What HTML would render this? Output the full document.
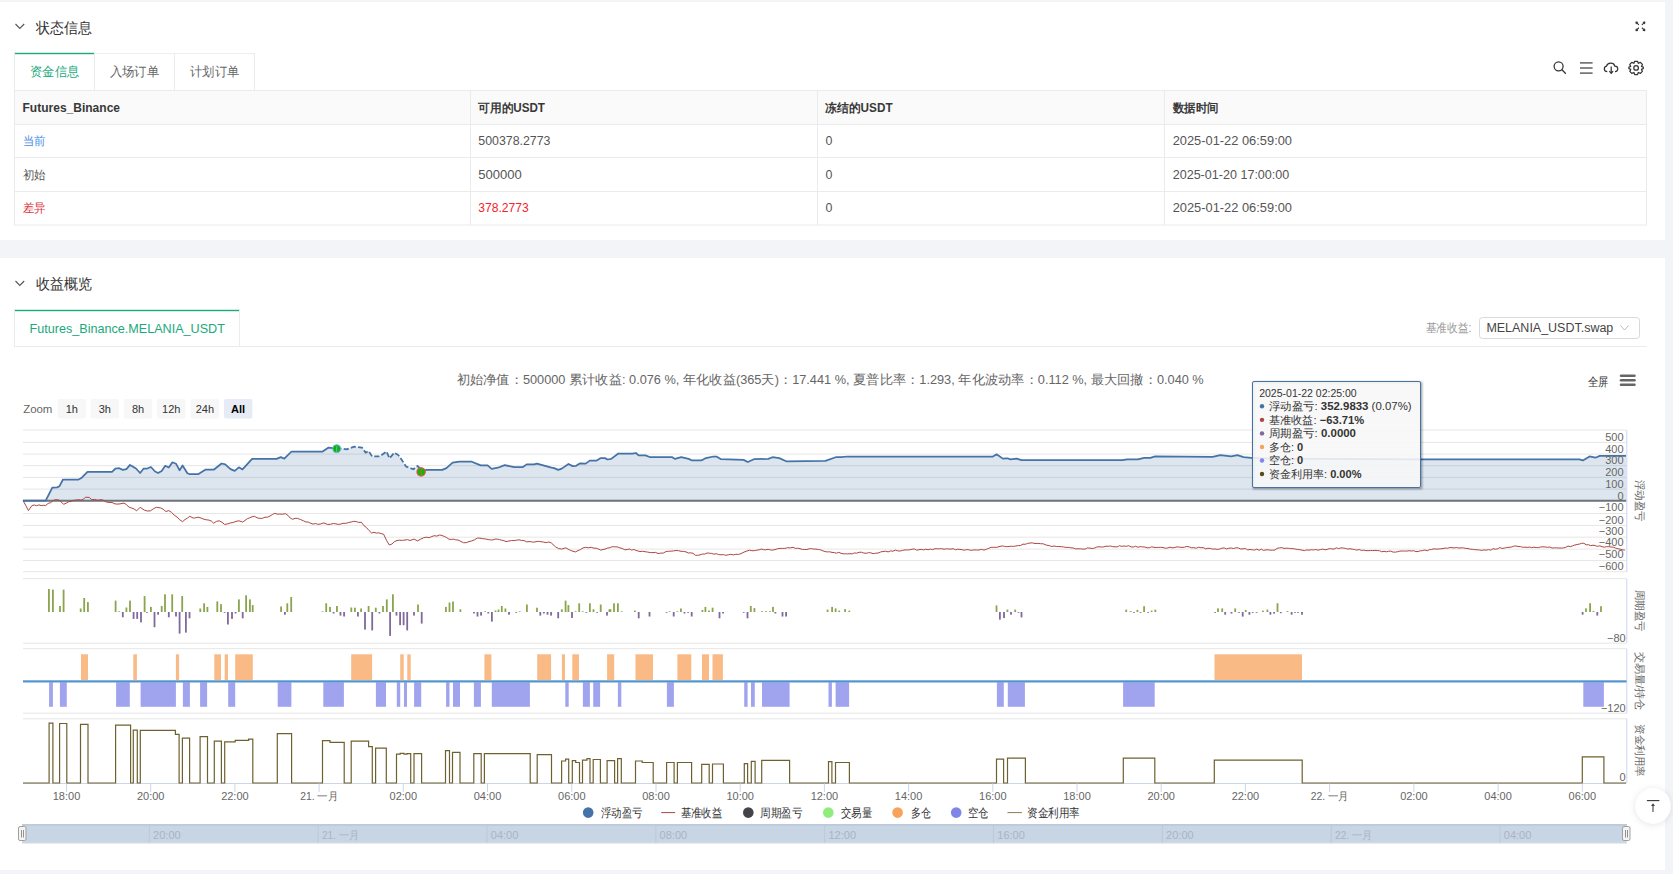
<!DOCTYPE html>
<html><head><meta charset="utf-8"><title>status</title><style>
html,body{margin:0;padding:0}
body{width:1673px;height:874px;overflow:hidden;background:#f3f4f7;font-family:"Liberation Sans", sans-serif;position:relative;color:#333}
.panel{position:absolute;left:0;width:1665px;background:#fff}
svg{position:absolute;left:0;top:0}
svg text{font-family:"Liberation Sans", sans-serif}
</style></head><body>
<div class="panel" style="top:2px;height:238px"></div>
<div class="panel" style="top:258px;height:612px"></div>
<svg width="1673" height="874" viewBox="0 0 1673 874">
<polyline points="15.5,24 19.8,28.5 24.2,24" fill="none" stroke="#555" stroke-width="1.1"/>
<polyline points="15.5,281 19.8,285.5 24.2,281" fill="none" stroke="#555" stroke-width="1.1"/>
<text x="36" y="33" font-size="15" fill="#333" textLength="56" lengthAdjust="spacingAndGlyphs">状态信息</text>
<text x="36" y="289.3" font-size="15" fill="#333" textLength="56.3" lengthAdjust="spacingAndGlyphs">收益概览</text>
<g stroke="#3a3a3a" stroke-width="1.1" fill="none" stroke-linecap="round" stroke-linejoin="round">
<path d="M1636.2,23.6 L1636,22 L1637.6,22.2 M1636.1,22.1 L1638.6,24.6"/>
<path d="M1644.6,23.6 L1644.8,22 L1643.2,22.2 M1644.7,22.1 L1642.2,24.6"/>
<path d="M1636.2,29 L1636,30.6 L1637.6,30.4 M1636.1,30.5 L1638.6,28"/>
<path d="M1644.6,29 L1644.8,30.6 L1643.2,30.4 M1644.7,30.5 L1642.2,28"/>
</g>
<rect x="14" y="52.8" width="80.5" height="1.4" fill="#19a97b"/>
<line x1="94.5" y1="53.5" x2="255" y2="53.5" stroke="#eeeeee"/>
<line x1="14.5" y1="53" x2="14.5" y2="90" stroke="#ececec"/>
<line x1="94.5" y1="53" x2="94.5" y2="90" stroke="#ececec"/>
<line x1="174.5" y1="53" x2="174.5" y2="90" stroke="#ececec"/>
<line x1="254.5" y1="53" x2="254.5" y2="90" stroke="#ececec"/>
<text x="30" y="76" font-size="13" fill="#19a97b" textLength="49" lengthAdjust="spacingAndGlyphs">资金信息</text>
<text x="109.8" y="76" font-size="13" fill="#666" textLength="49.4" lengthAdjust="spacingAndGlyphs">入场订单</text>
<text x="190.2" y="76" font-size="13" fill="#666" textLength="49.2" lengthAdjust="spacingAndGlyphs">计划订单</text>
<g stroke="#333" stroke-width="1.25" fill="none">
<circle cx="1558.6" cy="66.3" r="4.5"/>
<line x1="1561.8" y1="69.5" x2="1565.8" y2="73.8"/>
<g stroke="#555" stroke-width="1.4"><line x1="1580" y1="62.9" x2="1592.6" y2="62.9"/><line x1="1580" y1="68" x2="1592.6" y2="68"/><line x1="1580" y1="73.1" x2="1592.6" y2="73.1"/></g>
<path d="M1607.3,71.6 C1603.5,71.6 1603.5,66.8 1606.5,66.2 C1607.5,62.5 1613.5,62 1614.8,66 C1618.6,66 1618.8,71.6 1615,71.6"/>
<line x1="1611.2" y1="66.5" x2="1611.2" y2="73.2"/>
<polyline points="1609.3,71.2 1611.2,73.3 1613.1,71.2"/>
<circle cx="1636.1" cy="67.9" r="2.3"/>
<path d="M1634.7,61.3 L1637.5,61.3 L1638.3,63.3 L1640.4,62.4 L1642.4,64.4 L1641.5,66.5 L1643.3,67.2 L1643.3,68.6 L1641.5,69.4 L1642.4,71.4 L1640.4,73.4 L1638.3,72.5 L1637.5,74.5 L1634.7,74.5 L1633.9,72.5 L1631.8,73.4 L1629.8,71.4 L1630.7,69.4 L1628.9,68.6 L1628.9,67.2 L1630.7,66.5 L1629.8,64.4 L1631.8,62.4 L1633.9,63.3 Z" stroke-linejoin="round"/>
</g>
<rect x="14.5" y="90.5" width="1632" height="34" fill="#fafafa"/>
<rect x="14.5" y="90.5" width="1632" height="134.5" fill="none" stroke="#ebebeb"/>
<line x1="14" y1="124.5" x2="1647" y2="124.5" stroke="#ebebeb"/>
<line x1="14" y1="157.5" x2="1647" y2="157.5" stroke="#ebebeb"/>
<line x1="14" y1="191.5" x2="1647" y2="191.5" stroke="#ebebeb"/>
<line x1="470.5" y1="90" x2="470.5" y2="225" stroke="#ebebeb"/>
<line x1="817.5" y1="90" x2="817.5" y2="225" stroke="#ebebeb"/>
<line x1="1164.5" y1="90" x2="1164.5" y2="225" stroke="#ebebeb"/>
<text x="22.5" y="111.5" font-size="12" fill="#383838" textLength="97.5" lengthAdjust="spacingAndGlyphs" font-weight="bold">Futures_Binance</text>
<text x="478.3" y="111.5" font-size="12" fill="#383838" textLength="66.7" lengthAdjust="spacingAndGlyphs" font-weight="bold">可用的USDT</text>
<text x="825.4" y="111.5" font-size="12" fill="#383838" textLength="67.2" lengthAdjust="spacingAndGlyphs" font-weight="bold">冻结的USDT</text>
<text x="1172.7" y="111.5" font-size="12" fill="#383838" textLength="45.7" lengthAdjust="spacingAndGlyphs" font-weight="bold">数据时间</text>
<text x="22.5" y="145" font-size="12.4" fill="#4a90e2" textLength="22.7" lengthAdjust="spacingAndGlyphs">当前</text>
<text x="22.5" y="178.5" font-size="12.4" fill="#555" textLength="22.7" lengthAdjust="spacingAndGlyphs">初始</text>
<text x="22.5" y="212" font-size="12.4" fill="#d9363e" textLength="22.7" lengthAdjust="spacingAndGlyphs">差异</text>
<text x="478.3" y="145" font-size="12.4" fill="#555" textLength="72.2" lengthAdjust="spacingAndGlyphs">500378.2773</text>
<text x="478.3" y="178.5" font-size="12.4" fill="#555" textLength="43.5" lengthAdjust="spacingAndGlyphs">500000</text>
<text x="478.3" y="212" font-size="12.4" fill="#f5222d" textLength="50.5" lengthAdjust="spacingAndGlyphs">378.2773</text>
<text x="825.4" y="145" font-size="12.4" fill="#555">0</text>
<text x="825.4" y="178.5" font-size="12.4" fill="#555">0</text>
<text x="825.4" y="212" font-size="12.4" fill="#555">0</text>
<text x="1172.7" y="145" font-size="12.8" fill="#555" textLength="119.3" lengthAdjust="spacingAndGlyphs">2025-01-22 06:59:00</text>
<text x="1172.7" y="178.5" font-size="12.8" fill="#555" textLength="116.6" lengthAdjust="spacingAndGlyphs">2025-01-20 17:00:00</text>
<text x="1172.7" y="212" font-size="12.8" fill="#555" textLength="119.3" lengthAdjust="spacingAndGlyphs">2025-01-22 06:59:00</text>
<rect x="14" y="309.8" width="226" height="1.4" fill="#19a97b"/>
<line x1="14.5" y1="310" x2="14.5" y2="346" stroke="#ececec"/>
<line x1="239.5" y1="310" x2="239.5" y2="346" stroke="#ececec"/>
<line x1="14" y1="346.5" x2="1647" y2="346.5" stroke="#ebebeb"/>
<text x="29.5" y="333.3" font-size="12.6" fill="#19a97b" textLength="195.4" lengthAdjust="spacingAndGlyphs">Futures_Binance.MELANIA_USDT</text>
<text x="1425.7" y="332.3" font-size="12" fill="#999" textLength="45.9" lengthAdjust="spacingAndGlyphs">基准收益:</text>
<rect x="1479.5" y="317.5" width="160" height="21" rx="3" fill="#fff" stroke="#d9d9d9"/>
<text x="1486.4" y="332.3" font-size="12.5" fill="#444" textLength="126.9" lengthAdjust="spacingAndGlyphs">MELANIA_USDT.swap</text>
<polyline points="1620.5,325.5 1624.5,330 1628.5,325.5" fill="none" stroke="#bbb" stroke-width="1"/>
<line x1="23" y1="430.0" x2="1626.5" y2="430.0" stroke="#e6e6e6" stroke-width="1"/>
<line x1="23" y1="442.4" x2="1626.5" y2="442.4" stroke="#e6e6e6" stroke-width="1"/>
<line x1="23" y1="454.1" x2="1626.5" y2="454.1" stroke="#e6e6e6" stroke-width="1"/>
<line x1="23" y1="465.7" x2="1626.5" y2="465.7" stroke="#e6e6e6" stroke-width="1"/>
<line x1="23" y1="477.4" x2="1626.5" y2="477.4" stroke="#e6e6e6" stroke-width="1"/>
<line x1="23" y1="489.1" x2="1626.5" y2="489.1" stroke="#e6e6e6" stroke-width="1"/>
<line x1="23" y1="513.5" x2="1626.5" y2="513.5" stroke="#e6e6e6" stroke-width="1"/>
<line x1="23" y1="525.4" x2="1626.5" y2="525.4" stroke="#e6e6e6" stroke-width="1"/>
<line x1="23" y1="537.2" x2="1626.5" y2="537.2" stroke="#e6e6e6" stroke-width="1"/>
<line x1="23" y1="549.1" x2="1626.5" y2="549.1" stroke="#e6e6e6" stroke-width="1"/>
<line x1="23" y1="560.6" x2="1626.5" y2="560.6" stroke="#e6e6e6" stroke-width="1"/>
<line x1="23" y1="571.7" x2="1626.5" y2="571.7" stroke="#e6e6e6" stroke-width="1"/>
<polygon points="23,500.7 45.7,500.7 52.3,487.6 57.1,487.4 59.5,486.2 63,479.5 78.6,479.5 81,478.3 87.5,471.8 112,471.8 115.6,468.5 119.2,468.2 122.8,469.9 126.4,469.1 130,464.9 136,468.5 140.1,473 143.7,468.5 146.7,468.7 150.9,467 155.1,471.5 158.1,473 161.7,470.9 165.2,465.8 168.8,467.5 172.4,462.3 176,463.7 179.6,470.3 182.6,465.5 187.4,473.3 189.8,474.2 198.1,474.2 205.3,469.7 213.7,469.7 221.6,463.5 225.2,464.3 230.5,469.1 234.7,470.9 238.9,467.3 242.5,469.4 252.1,458.9 276.6,458.9 280.8,457.1 284.3,458.7 291.5,451.5 322.6,451.5 328.6,447.6 336.3,448.7 341.7,448.7 346.5,449.3 354.3,446.7 362,447.6 365.6,452.7 368.6,451.1 372.2,456.5 380,456.3 386.5,451.5 389.5,458.3 394.3,452.7 397.9,454.7 400,457.2 406,466.5 408.7,467.5 413.3,469.3 417.4,466 419.7,467.9 421,471.8 426.5,469.9 442.3,469.9 446.4,468.1 452.6,462.6 459.4,461.7 471.8,461.7 480.7,465.4 487.6,465.4 491.7,468.8 497.9,467.7 504.7,465.1 514.3,467.2 522.6,467.2 526.7,464.4 534.2,464.4 537,463.6 551.4,467.7 554.1,468.1 558.2,469.9 561.7,468.6 568.5,464 572.7,466.1 576.1,465.8 580.2,463.3 585.7,463.6 589.8,460.6 596.7,460.6 600.8,458.1 604.9,458.1 607.7,459.5 611.2,458.9 618,453.7 632.5,453.7 635.9,453 638.6,455.4 645.5,455.4 650.3,457.2 672.3,457.2 675,458.9 681.2,457.2 688.7,458.9 691.5,460.3 701.8,460.3 705.9,458.1 713.4,456.5 716.9,456.7 721,459.2 743.6,459.9 747.8,462 753.9,459.2 768.3,458.9 772.5,457.2 779.3,458.1 786.2,461.3 825.4,460.9 835.7,457.2 841.2,457.2 847.4,456.5 992.9,456.5 996.6,454.3 1002.8,458.6 1007.4,458.3 1010.5,459.4 1016.8,458.6 1021.4,460.2 1122.4,460.2 1127.1,459.4 1138,459.4 1144.2,457.9 1150.4,457.9 1155.1,456.3 1212.6,456.8 1220.3,455.2 1231.2,456.3 1237.4,455.2 1243.6,457.1 1251.4,457.9 1270,458.5 1420,459.3 1579.4,459.3 1582.8,460.4 1589.6,456.4 1595.3,457.7 1599.8,455.9 1626,455.9 1626,500.8 23,500.8" fill="#4572a7" fill-opacity="0.18"/>
<line x1="23" y1="500.8" x2="1626.5" y2="500.8" stroke="#6d737b" stroke-width="2"/>
<polyline points="23,500.5 25.7,505.3 28.4,510.6 32,505.5 34.3,505 36.6,505.7 38.9,504.9 41.1,505.6 43.4,505.3 45.7,505.5 48.2,503.4 50.8,502.6 53.4,500.4 55.9,499.6 59.5,500.2 63.6,504.3 66.2,503.2 68.8,501.7 71.4,501.3 73.8,500.2 76.2,500.1 78.6,499.6 81,500.2 83.3,499.2 85.7,497.2 89.3,497.4 91.7,499.6 94.7,499.4 97.7,500.2 101.3,499.6 103.7,500.4 106.1,502 109,502.4 112,502.5 115,503.9 118,504.1 121,503.7 124,503.1 126.4,504.6 128.8,507 131.2,507.9 133.9,508.8 136.6,510.9 140.1,507.3 144.3,510.1 147.3,511 150.3,510.9 153.3,508.8 156.3,507.3 160.5,507.9 163.2,509.2 165.8,511.5 168.8,510.6 171.5,512.3 174.2,515.1 177,517 179.8,519.9 182.6,521.7 185,519.5 187.4,518.2 189.8,516.3 193.3,518.1 195.7,517.8 198.1,517.2 201.1,518.1 204.1,519.3 206.5,519.8 208.9,520.1 211.3,521 213.7,523.2 216.4,521.4 219.2,520.8 221.9,522.2 224.6,524.4 227.4,524 230.1,523 232.9,522.5 235.9,521.4 238.9,520.8 242.5,522 244.9,520.5 247.3,518.7 249.7,517.8 252.1,516.8 254.5,516.3 257.1,517.8 259.8,518.4 262.4,518.3 265,517.2 267.6,517.2 270,516 272.4,514.6 274.8,513.3 277.2,514.2 279.6,514.1 282.6,514.2 285.5,513.7 287.9,515.3 290.3,518.1 292.7,519.3 295.1,518.3 297.5,518.4 300.5,519.5 303.5,520.8 305.9,522 308.2,522 310.6,523.3 313,524.1 315.4,523.5 317.8,524.3 320.2,524.1 323.8,522.9 327.4,524.4 330.4,524.3 333.4,523.5 335.8,523.8 338.1,524.4 340.5,524.1 343.1,523.3 345.8,523.3 348.4,522.6 351.1,522 353.7,521.3 356.3,521.6 358.8,522.4 361.4,522.3 363.9,525.6 366.5,527.6 369.1,530.6 371.6,533 374,532.3 376.4,533.1 378.8,532.8 381.2,533.7 383.6,534.2 386.5,540.3 389.3,545 391.9,544 394.4,541.7 397,540.5 399.7,540.2 402.3,540.4 405,540 407.5,539.6 410,540.5 414.1,539.1 417.5,540.9 420.6,539.2 423.7,537.7 426.4,537.2 429.2,537.7 431.8,536.5 434.4,535.7 436.9,536.1 439.5,535 441.8,535.4 444.2,536.4 446.5,537.5 448.9,539.1 451.2,539.5 453.5,539.1 455.7,539.8 458,540 460.8,541.4 463.5,542.7 466.2,542.7 469,541.6 471.8,540.9 474.5,539.8 477.3,538.1 480,538.1 482.8,538.7 485.5,539 488.2,539.5 490.5,539.9 492.8,539.9 495.1,539.1 497.3,539.1 499.5,539.6 501.7,540.2 503.9,540.7 506.1,541.6 508.9,541 511.6,540.5 514.1,540.6 516.5,540.2 519,539.8 521.4,540.4 523.9,540.5 526.7,541.9 529,541.6 531.3,541.8 533.7,542.2 536,541.7 538.3,541.3 540.9,541.7 543.5,542.1 546.2,542.6 548.8,542 551.4,543 555.5,546.8 558.6,548.5 561.7,549.1 565.8,547.8 568.2,549.2 570.6,550.4 573,551.3 575.4,551.9 578,550.6 580.5,549.5 583.1,547.9 585.7,547.3 588.4,547.8 591.2,547.3 593.9,548.2 596.2,548.2 598.5,549.1 600.8,550.1 605,549.1 607.4,548.1 609.8,547.7 612.2,546.7 614.6,546.8 617.2,546.9 619.8,547.8 622.3,548.5 624.9,549.8 627.1,549.5 629.3,549 631.6,550.1 633.8,549.5 636.9,550.7 640,551.5 642.6,551.3 645.1,551.7 647.7,552.1 650.3,552.6 652.9,552.6 655.5,552.4 658,553.5 660.6,553.2 663.4,553 666.1,551.5 668.6,551.3 671.1,551.1 673.6,550.9 676.1,550.5 678.6,550.7 681,551.3 683.5,551.4 686,551.9 688.3,553 690.7,552.8 693,553.3 695.4,555.3 697.7,555.3 700,554.9 702.3,554 704.7,554.1 707,553 709.3,553.2 711.6,553.4 713.9,554.2 716.2,553.7 718.6,554.6 721,554.8 723.4,554.6 725.8,555.3 728.3,554.8 730.8,554.3 733.3,554.9 735.9,554.3 738.4,554.4 740.9,553.7 744,552.1 747.1,550.9 749.5,550.2 751.9,550.7 754.3,550.7 756.7,550.2 759.1,549.8 761.5,549.1 763.7,549.7 765.9,549.8 768.1,549.3 770.3,549.9 772.5,550.1 775,549.6 777.4,548.8 779.9,548.4 782.3,548.4 784.8,548.4 787.6,547.7 790.3,547.9 793.1,547.3 795.4,548.4 797.7,548.2 800,548.7 802.3,549.4 804.6,549.5 806.9,549.5 809.1,548.8 811.4,548.6 813.7,549.1 816,549.1 818.3,549.5 820.6,549.9 822.9,550.8 825.1,551.6 827.4,551.9 829.7,551.8 832,552.4 834.3,552.6 836.5,553.2 838.8,552.3 841,553.3 843.2,553.8 845.5,553.8 847.7,553.9 850,553.7 852.2,553.9 854.5,552.9 856.7,553.2 859,552.3 861.4,552.2 863.7,553 866.1,553.3 868.4,552.7 870.8,552.8 873.1,553.7 875.5,553.2 878,553.1 880.5,552 883,551.5 885.6,551.2 888.1,551.9 890.6,550.9 893,551.2 895.4,550.1 897.8,550.9 900.2,551 902.6,550.4 905,549.9 907.4,550 909.8,549.8 912.1,549.2 914.4,549 916.7,550.2 919,549.7 921.2,549.4 923.5,549.9 925.8,549.2 928.1,549.7 930.4,549.1 932.7,549.6 935,548.7 937.3,548.8 939.6,548.8 941.8,548.7 944.1,549.2 946.4,548.8 948.7,549 951,549.1 953.2,548.7 955.5,549.8 957.7,549.2 959.9,549.4 962.1,549.7 964.3,550.2 966.6,549.6 968.8,549.8 971.3,550.4 973.9,549.9 976.4,550 978.9,550 981.5,549.4 984,550.1 986.4,549.3 988.8,548.3 991.1,547.3 993.5,547.3 996.8,547.3 1000,546.4 1002.3,545.9 1004.5,546.4 1006.8,546.7 1009.1,546.5 1011.3,546.2 1013.6,546.4 1015.9,546 1018.3,545.6 1020.6,545.5 1023,544.1 1025.3,544.3 1027.6,543.4 1030,543 1032.3,542.9 1035,543.5 1037.8,543.4 1040.5,543.7 1043.2,543.8 1046.3,545.1 1049.4,545.7 1051.7,546.5 1054.1,546 1056.4,546.5 1058.7,546.5 1061.1,546.7 1063.4,546.9 1065.8,547.4 1068.3,547.4 1070.7,547.8 1073.2,548 1075.6,548.9 1078.1,548.8 1080.5,548.8 1082.8,549.1 1085.2,549 1087.5,547.9 1089.8,548.1 1092.2,548.5 1094.5,548.1 1096.8,547 1099.1,546.8 1101.5,547 1103.8,546.9 1106,546.2 1108.3,546.3 1110.5,546 1112.8,546.7 1115,546.8 1117.3,546.9 1119.5,545.7 1121.8,546.4 1124,546 1126.3,546.3 1128.7,545.7 1131,546.9 1133.3,547.1 1135.6,546.2 1137.9,547.3 1140.3,546.6 1142.6,546.9 1144.9,547 1147.1,547.8 1149.4,547.7 1151.7,546.8 1153.9,547.3 1156.2,547.5 1158.4,547.4 1160.7,547.3 1163,547.5 1165.2,548.2 1167.5,548 1169.9,547.2 1172.3,547.8 1174.7,547.5 1177.1,546.8 1179.6,547.2 1182,547.4 1184.4,547.2 1186.8,546.4 1189.2,546.9 1191.5,547.8 1193.9,547.7 1196.2,548.2 1198.6,547.2 1200.9,547.7 1203.2,547.6 1205.6,548.8 1207.9,548.3 1210.3,548.4 1212.6,549.1 1214.9,548.9 1217.2,549.4 1219.6,549.1 1221.9,548.2 1224.2,547.9 1226.5,548.9 1228.9,548.2 1231.2,548 1233.5,548.5 1235.9,547.8 1238.2,547.9 1240.6,549 1243,548.8 1245.3,548.5 1247.7,549.9 1250,549.5 1252.3,549.8 1254.5,550.1 1256.8,549.1 1259.1,550.3 1261.3,549.2 1263.6,550.4 1265.9,549.9 1268.2,549.8 1270.4,550.2 1272.7,550.2 1275,550 1277.2,548.3 1279.5,547.9 1281.8,547.6 1284,548.4 1286.3,548.2 1288.6,548.3 1290.8,548.6 1293.1,548.7 1295.4,549.1 1297.7,549.5 1299.9,549.7 1302.2,550.2 1304.5,550.6 1306.7,549.9 1309,550.2 1311.2,549.7 1313.5,550 1315.7,549.5 1318,550.2 1320.3,549.6 1322.6,549.1 1324.9,549.8 1327.2,549.4 1329.5,548.6 1331.7,548.8 1334,549.2 1336.3,547.8 1338.6,548.6 1340.9,547.9 1343.2,548 1345.4,548.4 1347.7,549.1 1350,548.7 1352.2,549.1 1354.5,549.5 1356.8,550.2 1359.1,549.5 1361.3,550.4 1363.6,550.2 1365.9,550.6 1368.1,550.7 1370.4,550.5 1372.7,550.6 1374.9,550.4 1377.2,550.6 1379.5,550.7 1381.8,551.8 1384,551.3 1386.3,551.8 1388.6,551.3 1390.8,551.1 1393.1,552.1 1395.4,552.1 1397.7,551.7 1399.9,551.1 1402.2,551 1404.5,551 1406.8,551.1 1409,550.7 1411.3,551 1413.6,550.7 1415.9,551.6 1418.1,551.5 1420.4,550.8 1422.7,550.6 1424.9,550 1427.2,550.8 1429.4,549.7 1431.7,549.5 1434,548.8 1436.2,549.1 1438.5,549 1440.7,548.8 1443,548.6 1445.3,548 1447.6,548.3 1449.8,547.5 1452.1,547.7 1454.4,547.9 1456.7,547.5 1458.9,548.1 1461.2,547.8 1463.5,547.9 1465.8,548.4 1468,548.5 1470.3,549.2 1472.6,549.3 1474.8,549.7 1477.1,549.8 1479.4,550 1481.7,550.4 1483.9,549.9 1486.2,550.2 1488.5,549.6 1490.8,550.2 1493,548.7 1495.3,549.2 1497.6,548.8 1499.8,547.6 1502.1,548.4 1504.4,548.1 1506.7,547.5 1509,547.3 1511.2,547.1 1513.5,546.3 1515.8,545.9 1518,546.5 1520.3,546.6 1522.6,547.2 1524.8,547.2 1527.1,547.4 1529.4,547.1 1531.6,547.6 1533.9,547.2 1536.2,547.5 1538.5,547.6 1540.7,547 1543,546.8 1545.3,547 1547.6,547.3 1549.8,547 1552.1,548.1 1554.4,547.8 1556.7,547.9 1558.9,548 1561.2,548.1 1563.5,547.9 1565.8,547.3 1568,546.1 1570.3,546.6 1572.5,545.9 1574.8,545 1577.1,544.5 1579.3,544.1 1581.6,543.3 1583.9,543.3 1586.2,544.8 1588.4,544.7 1590.7,545.6 1593,545.2 1595.2,545.6 1597.5,546.4 1599.8,545.8 1602.1,546.7 1604.3,547.2 1606.6,546.7 1608.9,546.7 1611.1,547 1613.4,547.2 1615.7,548.1 1618,548.8 1620.2,549.2 1622.5,549.8 1624.8,550.2" fill="none" stroke="#aa4643" stroke-width="1" stroke-linejoin="round"/>
<polyline points="23,500.7 45.7,500.7 52.3,487.6 57.1,487.4 59.5,486.2 63,479.5 78.6,479.5 81,478.3 87.5,471.8 112,471.8 115.6,468.5 119.2,468.2 122.8,469.9 126.4,469.1 130,464.9 136,468.5 140.1,473 143.7,468.5 146.7,468.7 150.9,467 155.1,471.5 158.1,473 161.7,470.9 165.2,465.8 168.8,467.5 172.4,462.3 176,463.7 179.6,470.3 182.6,465.5 187.4,473.3 189.8,474.2 198.1,474.2 205.3,469.7 213.7,469.7 221.6,463.5 225.2,464.3 230.5,469.1 234.7,470.9 238.9,467.3 242.5,469.4 252.1,458.9 276.6,458.9 280.8,457.1 284.3,458.7 291.5,451.5 322.6,451.5 328.6,447.6 336.3,448.7" fill="none" stroke="#4572a7" stroke-width="1.75" stroke-linejoin="round"/>
<polyline points="336.3,448.7 341.7,448.7 346.5,449.3 354.3,446.7 362,447.6 365.6,452.7 368.6,451.1 372.2,456.5 380,456.3 386.5,451.5 389.5,458.3 394.3,452.7 397.9,454.7 400,457.2 406,466.5 408.7,467.5 413.3,469.3 417.4,466 419.7,467.9 421,471.8" fill="none" stroke="#4572a7" stroke-width="1.75" stroke-dasharray="5.2,2.2" stroke-linejoin="round"/>
<polyline points="421,471.8 426.5,469.9 442.3,469.9 446.4,468.1 452.6,462.6 459.4,461.7 471.8,461.7 480.7,465.4 487.6,465.4 491.7,468.8 497.9,467.7 504.7,465.1 514.3,467.2 522.6,467.2 526.7,464.4 534.2,464.4 537,463.6 551.4,467.7 554.1,468.1 558.2,469.9 561.7,468.6 568.5,464 572.7,466.1 576.1,465.8 580.2,463.3 585.7,463.6 589.8,460.6 596.7,460.6 600.8,458.1 604.9,458.1 607.7,459.5 611.2,458.9 618,453.7 632.5,453.7 635.9,453 638.6,455.4 645.5,455.4 650.3,457.2 672.3,457.2 675,458.9 681.2,457.2 688.7,458.9 691.5,460.3 701.8,460.3 705.9,458.1 713.4,456.5 716.9,456.7 721,459.2 743.6,459.9 747.8,462 753.9,459.2 768.3,458.9 772.5,457.2 779.3,458.1 786.2,461.3 825.4,460.9 835.7,457.2 841.2,457.2 847.4,456.5 992.9,456.5 996.6,454.3 1002.8,458.6 1007.4,458.3 1010.5,459.4 1016.8,458.6 1021.4,460.2 1122.4,460.2 1127.1,459.4 1138,459.4 1144.2,457.9 1150.4,457.9 1155.1,456.3 1212.6,456.8 1220.3,455.2 1231.2,456.3 1237.4,455.2 1243.6,457.1 1251.4,457.9 1270,458.5 1420,459.3 1579.4,459.3 1582.8,460.4 1589.6,456.4 1595.3,457.7 1599.8,455.9 1626,455.9" fill="none" stroke="#4572a7" stroke-width="1.75" stroke-linejoin="round"/>
<circle cx="336.7" cy="448.7" r="4.0" fill="#00b900" stroke="#78aef0" stroke-width="1"/>
<path d="M337.2,445.8 Q336.4,446.6 336.7,447.6 L336.7,452.3" fill="none" stroke="#8ab8e0" stroke-width="0.8"/>
<circle cx="421.1" cy="471.9" r="4.2" fill="#00c000" stroke="#ff4848" stroke-width="1.1"/>
<path d="M421.6,469.2 Q420.6,469.8 421.1,470.8 L421.1,475.8" fill="none" stroke="#f05050" stroke-width="0.9"/>
<line x1="1626.8" y1="430" x2="1626.8" y2="572" stroke="#ccd6eb" stroke-width="1"/>
<text x="1623.5" y="440.6" font-size="11" fill="#666" text-anchor="end">500</text>
<text x="1623.5" y="452.5" font-size="11" fill="#666" text-anchor="end">400</text>
<text x="1623.5" y="464.1" font-size="11" fill="#666" text-anchor="end">300</text>
<text x="1623.5" y="475.6" font-size="11" fill="#666" text-anchor="end">200</text>
<text x="1623.5" y="487.5" font-size="11" fill="#666" text-anchor="end">100</text>
<text x="1623.5" y="499.8" font-size="11" fill="#666" text-anchor="end">0</text>
<text x="1623.5" y="511.3" font-size="11" fill="#666" text-anchor="end">−100</text>
<text x="1623.5" y="523.6" font-size="11" fill="#666" text-anchor="end">−200</text>
<text x="1623.5" y="534.9" font-size="11" fill="#666" text-anchor="end">−300</text>
<text x="1623.5" y="546.3" font-size="11" fill="#666" text-anchor="end">−400</text>
<text x="1623.5" y="558.4" font-size="11" fill="#666" text-anchor="end">−500</text>
<text x="1623.5" y="570.0" font-size="11" fill="#666" text-anchor="end">−600</text>
<line x1="23" y1="578.7" x2="1626.5" y2="578.7" stroke="#e6e6e6"/>
<line x1="23" y1="643.2" x2="1626.5" y2="643.2" stroke="#e6e6e6"/>
<line x1="1626.8" y1="578.7" x2="1626.8" y2="643" stroke="#ccd6eb"/>
<rect x="48.0" y="589.0" width="1.8" height="23.0" fill="#89a54e"/>
<rect x="52.0" y="589.6" width="1.8" height="22.4" fill="#89a54e"/>
<rect x="59.1" y="606.0" width="1.8" height="6.0" fill="#89a54e"/>
<rect x="62.7" y="589.6" width="1.8" height="22.4" fill="#89a54e"/>
<rect x="79.8" y="608.5" width="1.8" height="3.5" fill="#89a54e"/>
<rect x="83.3" y="598.0" width="1.8" height="14.0" fill="#89a54e"/>
<rect x="87.0" y="602.1" width="1.8" height="9.9" fill="#89a54e"/>
<rect x="114.7" y="600.6" width="1.8" height="11.4" fill="#89a54e"/>
<rect x="118.1" y="611.3" width="1.8" height="0.7" fill="#89a54e"/>
<rect x="125.5" y="607.5" width="1.8" height="4.5" fill="#89a54e"/>
<rect x="129.1" y="600.6" width="1.8" height="11.4" fill="#89a54e"/>
<rect x="143.7" y="596.1" width="1.8" height="15.9" fill="#89a54e"/>
<rect x="150.0" y="606.9" width="1.8" height="5.1" fill="#89a54e"/>
<rect x="160.8" y="606.0" width="1.8" height="6.0" fill="#89a54e"/>
<rect x="164.1" y="594.3" width="1.8" height="17.7" fill="#89a54e"/>
<rect x="171.3" y="594.3" width="1.8" height="17.7" fill="#89a54e"/>
<rect x="181.3" y="596.1" width="1.8" height="15.9" fill="#89a54e"/>
<rect x="199.4" y="608.5" width="1.8" height="3.5" fill="#89a54e"/>
<rect x="203.2" y="603.3" width="1.8" height="8.7" fill="#89a54e"/>
<rect x="206.5" y="606.9" width="1.8" height="5.1" fill="#89a54e"/>
<rect x="216.4" y="601.4" width="1.8" height="10.6" fill="#89a54e"/>
<rect x="220.1" y="604.1" width="1.8" height="7.9" fill="#89a54e"/>
<rect x="238.0" y="599.4" width="1.8" height="12.6" fill="#89a54e"/>
<rect x="245.2" y="595.3" width="1.8" height="16.7" fill="#89a54e"/>
<rect x="249.0" y="599.4" width="1.8" height="12.6" fill="#89a54e"/>
<rect x="251.8" y="605.1" width="1.8" height="6.9" fill="#89a54e"/>
<rect x="280.2" y="606.5" width="1.8" height="5.5" fill="#89a54e"/>
<rect x="286.4" y="603.3" width="1.8" height="8.7" fill="#89a54e"/>
<rect x="290.3" y="597.0" width="1.8" height="15.0" fill="#89a54e"/>
<rect x="321.7" y="611.3" width="1.8" height="0.7" fill="#89a54e"/>
<rect x="325.3" y="603.3" width="1.8" height="8.7" fill="#89a54e"/>
<rect x="329.1" y="606.9" width="1.8" height="5.1" fill="#89a54e"/>
<rect x="336.0" y="606.0" width="1.8" height="6.0" fill="#89a54e"/>
<rect x="350.4" y="607.5" width="1.8" height="4.5" fill="#89a54e"/>
<rect x="354.0" y="607.7" width="1.8" height="4.3" fill="#89a54e"/>
<rect x="360.2" y="608.5" width="1.8" height="3.5" fill="#89a54e"/>
<rect x="367.7" y="606.0" width="1.8" height="6.0" fill="#89a54e"/>
<rect x="374.9" y="607.7" width="1.8" height="4.3" fill="#89a54e"/>
<rect x="382.1" y="606.0" width="1.8" height="6.0" fill="#89a54e"/>
<rect x="385.9" y="599.4" width="1.8" height="12.6" fill="#89a54e"/>
<rect x="392.0" y="594.3" width="1.8" height="17.7" fill="#89a54e"/>
<rect x="417.1" y="604.5" width="1.8" height="7.5" fill="#89a54e"/>
<rect x="445.0" y="606.9" width="1.8" height="5.1" fill="#89a54e"/>
<rect x="448.6" y="602.5" width="1.8" height="9.5" fill="#89a54e"/>
<rect x="452.1" y="601.5" width="1.8" height="10.5" fill="#89a54e"/>
<rect x="459.5" y="609.3" width="1.8" height="2.7" fill="#89a54e"/>
<rect x="484.2" y="611.3" width="1.8" height="0.7" fill="#89a54e"/>
<rect x="494.6" y="610.5" width="1.8" height="1.5" fill="#89a54e"/>
<rect x="497.6" y="609.6" width="1.8" height="2.4" fill="#89a54e"/>
<rect x="500.9" y="606.0" width="1.8" height="6.0" fill="#89a54e"/>
<rect x="504.5" y="608.5" width="1.8" height="3.5" fill="#89a54e"/>
<rect x="518.8" y="611.3" width="1.8" height="0.7" fill="#89a54e"/>
<rect x="526.0" y="604.5" width="1.8" height="7.5" fill="#89a54e"/>
<rect x="536.1" y="607.7" width="1.8" height="4.3" fill="#89a54e"/>
<rect x="560.9" y="609.3" width="1.8" height="2.7" fill="#89a54e"/>
<rect x="564.7" y="600.6" width="1.8" height="11.4" fill="#89a54e"/>
<rect x="567.5" y="605.1" width="1.8" height="6.9" fill="#89a54e"/>
<rect x="574.7" y="611.3" width="1.8" height="0.7" fill="#89a54e"/>
<rect x="578.3" y="603.3" width="1.8" height="8.7" fill="#89a54e"/>
<rect x="581.8" y="611.3" width="1.8" height="0.7" fill="#89a54e"/>
<rect x="589.0" y="603.3" width="1.8" height="8.7" fill="#89a54e"/>
<rect x="592.6" y="609.3" width="1.8" height="2.7" fill="#89a54e"/>
<rect x="599.8" y="604.5" width="1.8" height="7.5" fill="#89a54e"/>
<rect x="608.5" y="609.3" width="1.8" height="2.7" fill="#89a54e"/>
<rect x="609.5" y="609.3" width="1.8" height="2.7" fill="#89a54e"/>
<rect x="613.1" y="603.3" width="1.8" height="8.7" fill="#89a54e"/>
<rect x="617.0" y="603.3" width="1.8" height="8.7" fill="#89a54e"/>
<rect x="620.8" y="611.3" width="1.8" height="0.7" fill="#89a54e"/>
<rect x="634.0" y="610.5" width="1.8" height="1.5" fill="#89a54e"/>
<rect x="668.7" y="611.3" width="1.8" height="0.7" fill="#89a54e"/>
<rect x="676.4" y="611.3" width="1.8" height="0.7" fill="#89a54e"/>
<rect x="680.0" y="608.5" width="1.8" height="3.5" fill="#89a54e"/>
<rect x="701.5" y="609.9" width="1.8" height="2.1" fill="#89a54e"/>
<rect x="704.5" y="606.9" width="1.8" height="5.1" fill="#89a54e"/>
<rect x="708.1" y="610.5" width="1.8" height="1.5" fill="#89a54e"/>
<rect x="711.7" y="607.7" width="1.8" height="4.3" fill="#89a54e"/>
<rect x="749.9" y="606.0" width="1.8" height="6.0" fill="#89a54e"/>
<rect x="753.5" y="608.1" width="1.8" height="3.9" fill="#89a54e"/>
<rect x="761.1" y="611.2" width="1.8" height="0.8" fill="#89a54e"/>
<rect x="765.1" y="611.2" width="1.8" height="0.8" fill="#89a54e"/>
<rect x="769.1" y="611.2" width="1.8" height="0.8" fill="#89a54e"/>
<rect x="772.1" y="606.9" width="1.8" height="5.1" fill="#89a54e"/>
<rect x="826.7" y="609.6" width="1.8" height="2.4" fill="#89a54e"/>
<rect x="831.2" y="606.9" width="1.8" height="5.1" fill="#89a54e"/>
<rect x="834.7" y="608.4" width="1.8" height="3.6" fill="#89a54e"/>
<rect x="838.3" y="610.6" width="1.8" height="1.4" fill="#89a54e"/>
<rect x="844.2" y="609.1" width="1.8" height="2.9" fill="#89a54e"/>
<rect x="848.4" y="610.6" width="1.8" height="1.4" fill="#89a54e"/>
<rect x="995.6" y="605.4" width="1.8" height="6.6" fill="#89a54e"/>
<rect x="1006.5" y="609.6" width="1.8" height="2.4" fill="#89a54e"/>
<rect x="1014.3" y="609.6" width="1.8" height="2.4" fill="#89a54e"/>
<rect x="1125.3" y="609.6" width="1.8" height="2.4" fill="#89a54e"/>
<rect x="1129.7" y="611.1" width="1.8" height="0.9" fill="#89a54e"/>
<rect x="1136.5" y="609.9" width="1.8" height="2.1" fill="#89a54e"/>
<rect x="1143.2" y="606.2" width="1.8" height="5.8" fill="#89a54e"/>
<rect x="1150.7" y="610.6" width="1.8" height="1.4" fill="#89a54e"/>
<rect x="1154.4" y="609.6" width="1.8" height="2.4" fill="#89a54e"/>
<rect x="1217.1" y="608.4" width="1.8" height="3.6" fill="#89a54e"/>
<rect x="1221.3" y="608.4" width="1.8" height="3.6" fill="#89a54e"/>
<rect x="1234.3" y="608.4" width="1.8" height="3.6" fill="#89a54e"/>
<rect x="1244.8" y="609.9" width="1.8" height="2.1" fill="#89a54e"/>
<rect x="1262.0" y="610.6" width="1.8" height="1.4" fill="#89a54e"/>
<rect x="1266.5" y="609.6" width="1.8" height="2.4" fill="#89a54e"/>
<rect x="1276.6" y="603.2" width="1.8" height="8.8" fill="#89a54e"/>
<rect x="1286.6" y="611.1" width="1.8" height="0.9" fill="#89a54e"/>
<rect x="1585.1" y="608.4" width="1.8" height="3.6" fill="#89a54e"/>
<rect x="1589.2" y="603.2" width="1.8" height="8.8" fill="#89a54e"/>
<rect x="1592.6" y="611.0" width="1.8" height="1.0" fill="#89a54e"/>
<rect x="1600.1" y="606.2" width="1.8" height="5.8" fill="#89a54e"/>
<rect x="121.9" y="612" width="1.8" height="5.3" fill="#80699b"/>
<rect x="132.7" y="612" width="1.8" height="6.9" fill="#80699b"/>
<rect x="136.3" y="612" width="1.8" height="6.9" fill="#80699b"/>
<rect x="140.1" y="612" width="1.8" height="10.4" fill="#80699b"/>
<rect x="146.1" y="612" width="1.8" height="0.8" fill="#80699b"/>
<rect x="153.6" y="612" width="1.8" height="15.2" fill="#80699b"/>
<rect x="157.2" y="612" width="1.8" height="2.7" fill="#80699b"/>
<rect x="167.9" y="612" width="1.8" height="5.3" fill="#80699b"/>
<rect x="175.1" y="612" width="1.8" height="4.5" fill="#80699b"/>
<rect x="178.7" y="612" width="1.8" height="21.6" fill="#80699b"/>
<rect x="185.0" y="612" width="1.8" height="20.6" fill="#80699b"/>
<rect x="188.6" y="612" width="1.8" height="6.3" fill="#80699b"/>
<rect x="223.7" y="612" width="1.8" height="0.8" fill="#80699b"/>
<rect x="227.0" y="612" width="1.8" height="12.5" fill="#80699b"/>
<rect x="231.1" y="612" width="1.8" height="6.9" fill="#80699b"/>
<rect x="234.7" y="612" width="1.8" height="1.5" fill="#80699b"/>
<rect x="241.8" y="612" width="1.8" height="6.3" fill="#80699b"/>
<rect x="284.0" y="612" width="1.8" height="2.7" fill="#80699b"/>
<rect x="332.7" y="612" width="1.8" height="1.5" fill="#80699b"/>
<rect x="339.6" y="612" width="1.8" height="3.6" fill="#80699b"/>
<rect x="343.2" y="612" width="1.8" height="4.5" fill="#80699b"/>
<rect x="357.0" y="612" width="1.8" height="4.5" fill="#80699b"/>
<rect x="364.1" y="612" width="1.8" height="17.6" fill="#80699b"/>
<rect x="371.3" y="612" width="1.8" height="18.4" fill="#80699b"/>
<rect x="378.5" y="612" width="1.8" height="1.5" fill="#80699b"/>
<rect x="389.2" y="612" width="1.8" height="23.9" fill="#80699b"/>
<rect x="395.6" y="612" width="1.8" height="3.6" fill="#80699b"/>
<rect x="399.2" y="612" width="1.8" height="13.2" fill="#80699b"/>
<rect x="402.7" y="612" width="1.8" height="13.2" fill="#80699b"/>
<rect x="406.3" y="612" width="1.8" height="18.4" fill="#80699b"/>
<rect x="413.1" y="612" width="1.8" height="3.6" fill="#80699b"/>
<rect x="420.8" y="612" width="1.8" height="11.6" fill="#80699b"/>
<rect x="473.1" y="612" width="1.8" height="1.5" fill="#80699b"/>
<rect x="476.6" y="612" width="1.8" height="4.5" fill="#80699b"/>
<rect x="480.2" y="612" width="1.8" height="3.6" fill="#80699b"/>
<rect x="487.4" y="612" width="1.8" height="1.5" fill="#80699b"/>
<rect x="491.0" y="612" width="1.8" height="9.6" fill="#80699b"/>
<rect x="508.1" y="612" width="1.8" height="2.7" fill="#80699b"/>
<rect x="515.3" y="612" width="1.8" height="0.8" fill="#80699b"/>
<rect x="539.4" y="612" width="1.8" height="3.6" fill="#80699b"/>
<rect x="543.0" y="612" width="1.8" height="1.5" fill="#80699b"/>
<rect x="546.6" y="612" width="1.8" height="2.7" fill="#80699b"/>
<rect x="550.2" y="612" width="1.8" height="3.6" fill="#80699b"/>
<rect x="557.3" y="612" width="1.8" height="6.3" fill="#80699b"/>
<rect x="571.1" y="612" width="1.8" height="6.0" fill="#80699b"/>
<rect x="585.4" y="612" width="1.8" height="0.8" fill="#80699b"/>
<rect x="596.2" y="612" width="1.8" height="0.8" fill="#80699b"/>
<rect x="606.1" y="612" width="1.8" height="3.6" fill="#80699b"/>
<rect x="637.8" y="612" width="1.8" height="6.3" fill="#80699b"/>
<rect x="648.6" y="612" width="1.8" height="4.5" fill="#80699b"/>
<rect x="665.7" y="612" width="1.8" height="0.8" fill="#80699b"/>
<rect x="672.8" y="612" width="1.8" height="4.5" fill="#80699b"/>
<rect x="683.6" y="612" width="1.8" height="1.5" fill="#80699b"/>
<rect x="687.2" y="612" width="1.8" height="0.8" fill="#80699b"/>
<rect x="690.8" y="612" width="1.8" height="4.5" fill="#80699b"/>
<rect x="718.6" y="612" width="1.8" height="6.3" fill="#80699b"/>
<rect x="722.2" y="612" width="1.8" height="1.5" fill="#80699b"/>
<rect x="742.8" y="612" width="1.8" height="0.8" fill="#80699b"/>
<rect x="746.6" y="612" width="1.8" height="6.3" fill="#80699b"/>
<rect x="774.5" y="612" width="1.8" height="1.5" fill="#80699b"/>
<rect x="781.6" y="612" width="1.8" height="4.5" fill="#80699b"/>
<rect x="785.2" y="612" width="1.8" height="4.5" fill="#80699b"/>
<rect x="999.0" y="612" width="1.8" height="7.6" fill="#80699b"/>
<rect x="1003.1" y="612" width="1.8" height="6.1" fill="#80699b"/>
<rect x="1010.1" y="612" width="1.8" height="2.7" fill="#80699b"/>
<rect x="1017.6" y="612" width="1.8" height="0.8" fill="#80699b"/>
<rect x="1020.6" y="612" width="1.8" height="5.4" fill="#80699b"/>
<rect x="1133.1" y="612" width="1.8" height="0.8" fill="#80699b"/>
<rect x="1139.7" y="612" width="1.8" height="0.8" fill="#80699b"/>
<rect x="1147.2" y="612" width="1.8" height="0.8" fill="#80699b"/>
<rect x="1214.2" y="612" width="1.8" height="0.8" fill="#80699b"/>
<rect x="1224.3" y="612" width="1.8" height="2.7" fill="#80699b"/>
<rect x="1230.6" y="612" width="1.8" height="1.6" fill="#80699b"/>
<rect x="1238.1" y="612" width="1.8" height="0.8" fill="#80699b"/>
<rect x="1241.8" y="612" width="1.8" height="4.6" fill="#80699b"/>
<rect x="1248.5" y="612" width="1.8" height="2.7" fill="#80699b"/>
<rect x="1251.8" y="612" width="1.8" height="0.8" fill="#80699b"/>
<rect x="1255.7" y="612" width="1.8" height="0.8" fill="#80699b"/>
<rect x="1269.5" y="612" width="1.8" height="2.7" fill="#80699b"/>
<rect x="1273.2" y="612" width="1.8" height="1.6" fill="#80699b"/>
<rect x="1279.9" y="612" width="1.8" height="1.2" fill="#80699b"/>
<rect x="1290.7" y="612" width="1.8" height="2.7" fill="#80699b"/>
<rect x="1294.1" y="612" width="1.8" height="0.8" fill="#80699b"/>
<rect x="1297.1" y="612" width="1.8" height="0.8" fill="#80699b"/>
<rect x="1301.1" y="612" width="1.8" height="2.7" fill="#80699b"/>
<rect x="1581.7" y="612" width="1.8" height="2.7" fill="#80699b"/>
<rect x="1596.4" y="612" width="1.8" height="3.6" fill="#80699b"/>
<text x="1625.7" y="641.6" font-size="11" fill="#666" text-anchor="end">−80</text>
<line x1="23" y1="648.7" x2="1626.5" y2="648.7" stroke="#e6e6e6"/>
<line x1="23" y1="713.2" x2="1626.5" y2="713.2" stroke="#e6e6e6"/>
<line x1="1626.8" y1="648.7" x2="1626.8" y2="713.5" stroke="#ccd6eb"/>
<rect x="81" y="654.3" width="7.0" height="26.5" fill="#f7a35c" fill-opacity="0.75"/>
<rect x="133.3" y="654.3" width="3.6" height="26.5" fill="#f7a35c" fill-opacity="0.75"/>
<rect x="175.9" y="654.3" width="3.2" height="26.5" fill="#f7a35c" fill-opacity="0.75"/>
<rect x="214.3" y="654.3" width="6.7" height="26.5" fill="#f7a35c" fill-opacity="0.75"/>
<rect x="224.7" y="654.3" width="3.3" height="26.5" fill="#f7a35c" fill-opacity="0.75"/>
<rect x="235.2" y="654.3" width="17.6" height="26.5" fill="#f7a35c" fill-opacity="0.75"/>
<rect x="351.2" y="654.3" width="20.9" height="26.5" fill="#f7a35c" fill-opacity="0.75"/>
<rect x="400.2" y="654.3" width="3.5" height="26.5" fill="#f7a35c" fill-opacity="0.75"/>
<rect x="407.3" y="654.3" width="3.4" height="26.5" fill="#f7a35c" fill-opacity="0.75"/>
<rect x="484.4" y="654.3" width="7.0" height="26.5" fill="#f7a35c" fill-opacity="0.75"/>
<rect x="537.2" y="654.3" width="13.9" height="26.5" fill="#f7a35c" fill-opacity="0.75"/>
<rect x="561.9" y="654.3" width="3.1" height="26.5" fill="#f7a35c" fill-opacity="0.75"/>
<rect x="572.3" y="654.3" width="6.7" height="26.5" fill="#f7a35c" fill-opacity="0.75"/>
<rect x="607.1" y="654.3" width="7.1" height="26.5" fill="#f7a35c" fill-opacity="0.75"/>
<rect x="635.5" y="654.3" width="17.5" height="26.5" fill="#f7a35c" fill-opacity="0.75"/>
<rect x="677.4" y="654.3" width="13.9" height="26.5" fill="#f7a35c" fill-opacity="0.75"/>
<rect x="702" y="654.3" width="7.0" height="26.5" fill="#f7a35c" fill-opacity="0.75"/>
<rect x="712.5" y="654.3" width="10.4" height="26.5" fill="#f7a35c" fill-opacity="0.75"/>
<rect x="1214.5" y="654.3" width="87.5" height="26.5" fill="#f7a35c" fill-opacity="0.75"/>
<rect x="49.1" y="681.5" width="3.8" height="25.3" fill="#8085e9" fill-opacity="0.75"/>
<rect x="59.9" y="681.5" width="6.9" height="25.3" fill="#8085e9" fill-opacity="0.75"/>
<rect x="116.1" y="681.5" width="13.7" height="25.3" fill="#8085e9" fill-opacity="0.75"/>
<rect x="140.6" y="681.5" width="35.3" height="25.3" fill="#8085e9" fill-opacity="0.75"/>
<rect x="182.9" y="681.5" width="7.0" height="25.3" fill="#8085e9" fill-opacity="0.75"/>
<rect x="200.1" y="681.5" width="7.0" height="25.3" fill="#8085e9" fill-opacity="0.75"/>
<rect x="228.2" y="681.5" width="7.0" height="25.3" fill="#8085e9" fill-opacity="0.75"/>
<rect x="277.7" y="681.5" width="13.7" height="25.3" fill="#8085e9" fill-opacity="0.75"/>
<rect x="323.3" y="681.5" width="20.6" height="25.3" fill="#8085e9" fill-opacity="0.75"/>
<rect x="375.9" y="681.5" width="10.1" height="25.3" fill="#8085e9" fill-opacity="0.75"/>
<rect x="396.8" y="681.5" width="3.4" height="25.3" fill="#8085e9" fill-opacity="0.75"/>
<rect x="404" y="681.5" width="3.0" height="25.3" fill="#8085e9" fill-opacity="0.75"/>
<rect x="414.1" y="681.5" width="7.1" height="25.3" fill="#8085e9" fill-opacity="0.75"/>
<rect x="446.1" y="681.5" width="3.4" height="25.3" fill="#8085e9" fill-opacity="0.75"/>
<rect x="453" y="681.5" width="7.0" height="25.3" fill="#8085e9" fill-opacity="0.75"/>
<rect x="473.9" y="681.5" width="7.0" height="25.3" fill="#8085e9" fill-opacity="0.75"/>
<rect x="491.8" y="681.5" width="38.1" height="25.3" fill="#8085e9" fill-opacity="0.75"/>
<rect x="565.3" y="681.5" width="3.4" height="25.3" fill="#8085e9" fill-opacity="0.75"/>
<rect x="582.9" y="681.5" width="7.0" height="25.3" fill="#8085e9" fill-opacity="0.75"/>
<rect x="593.2" y="681.5" width="6.9" height="25.3" fill="#8085e9" fill-opacity="0.75"/>
<rect x="617.9" y="681.5" width="3.4" height="25.3" fill="#8085e9" fill-opacity="0.75"/>
<rect x="666.9" y="681.5" width="7.0" height="25.3" fill="#8085e9" fill-opacity="0.75"/>
<rect x="744.2" y="681.5" width="3.4" height="25.3" fill="#8085e9" fill-opacity="0.75"/>
<rect x="751" y="681.5" width="3.8" height="25.3" fill="#8085e9" fill-opacity="0.75"/>
<rect x="762" y="681.5" width="27.6" height="25.3" fill="#8085e9" fill-opacity="0.75"/>
<rect x="828.5" y="681.5" width="3.4" height="25.3" fill="#8085e9" fill-opacity="0.75"/>
<rect x="835.6" y="681.5" width="13.5" height="25.3" fill="#8085e9" fill-opacity="0.75"/>
<rect x="996.9" y="681.5" width="6.9" height="25.3" fill="#8085e9" fill-opacity="0.75"/>
<rect x="1007.8" y="681.5" width="17.1" height="25.3" fill="#8085e9" fill-opacity="0.75"/>
<rect x="1123.1" y="681.5" width="31.6" height="25.3" fill="#8085e9" fill-opacity="0.75"/>
<rect x="1583.3" y="681.5" width="20.6" height="25.3" fill="#8085e9" fill-opacity="0.75"/>
<line x1="23" y1="681.3" x2="1626.5" y2="681.3" stroke="#8cc6e6" stroke-width="2.4"/>
<line x1="23" y1="681.5" x2="1626.5" y2="681.5" stroke="#5a8fcc" stroke-width="1.3"/>
<text x="1625.7" y="711.6" font-size="11" fill="#666" text-anchor="end">−120</text>
<line x1="23" y1="718.8" x2="1626.5" y2="718.8" stroke="#e6e6e6"/>
<line x1="1626.8" y1="718.8" x2="1626.8" y2="783" stroke="#ccd6eb"/>
<text x="1625.5" y="781.4" font-size="11" fill="#666" text-anchor="end">0</text>
<line x1="23" y1="783.5" x2="1626.5" y2="783.5" stroke="#ccd6eb" stroke-width="1"/>
<path d="M23,783 L49.1,783 L49.1,723.2 L52.9,723.2 L52.9,783 L59.6,783 L59.6,723.5 L66.8,723.5 L66.8,783 L80.5,783 L80.5,724.4 L88,724.4 L88,783 L115.6,783 L115.6,725.2 L130.6,725.2 L130.6,783 L133.3,783 L133.3,730.2 L137.3,730.2 L137.3,783 L140.3,783 L140.3,730.4 L175.4,730.4 L175.4,734.4 L179.1,734.4 L179.1,783 L182.4,783 L182.4,738.2 L189.6,738.2 L189.6,783 L200.1,783 L200.1,736.7 L207.5,736.7 L207.5,783 L214.3,783 L214.3,741.2 L221.4,741.2 L221.4,783 L224.7,783 L224.7,741.9 L235.2,741.9 L235.2,740.4 L248.6,740.4 L248.6,739.2 L252.8,739.2 L252.8,783 L277.3,783 L277.3,733.7 L291.6,733.7 L291.6,783 L322.5,783 L322.5,740.7 L330,740.7 L330,742.3 L344.2,742.3 L344.2,783 L351.2,783 L351.2,741.2 L368.6,741.2 L368.6,746.7 L372.3,746.7 L372.3,783 L375.6,783 L375.6,748.2 L386.3,748.2 L386.3,783 L396.5,783 L396.5,754.2 L400.2,754.2 L400.2,753.4 L404,753.4 L404,754.2 L407,754.2 L407,753.6 L410.7,753.6 L410.7,783 L414,783 L414,753.6 L421.6,753.6 L421.6,783 L445.5,783 L445.5,750.6 L449.5,750.6 L449.5,783 L452.5,783 L452.5,752.4 L460,752.4 L460,783 L473.8,783 L473.8,753.6 L481.2,753.6 L481.2,783 L484.4,783 L484.4,753.6 L530.2,753.6 L530.2,783 L537.2,783 L537.2,754.6 L551.5,754.6 L551.5,783 L561.6,783 L561.6,761 L565.6,761 L565.6,759.1 L568.7,759.1 L568.7,783 L572.3,783 L572.3,760.6 L575.7,760.6 L575.7,762.5 L579.5,762.5 L579.5,783 L582.5,783 L582.5,760.1 L587,760.1 L587,758.6 L590,758.6 L590,783 L593.2,783 L593.2,759.5 L600.4,759.5 L600.4,783 L607.1,783 L607.1,760.6 L614.6,760.6 L614.6,783 L617.6,783 L617.6,758.6 L621.3,758.6 L621.3,783 L635.5,783 L635.5,761 L642.2,761 L642.2,762.5 L653.2,762.5 L653.2,783 L666.6,783 L666.6,762.5 L674.1,762.5 L674.1,783 L677.4,783 L677.4,762.5 L691.6,762.5 L691.6,783 L701.7,783 L701.7,764.3 L709.2,764.3 L709.2,783 L712.5,783 L712.5,764 L723.4,764 L723.4,783 L744.3,783 L744.3,763.6 L747.6,763.6 L747.6,783 L751.3,783 L751.3,761.3 L755.1,761.3 L755.1,783 L761.7,783 L761.7,760.3 L789.6,760.3 L789.6,783 L828.5,783 L828.5,761.6 L831.9,761.6 L831.9,783 L835.5,783 L835.5,762.5 L849.4,762.5 L849.4,783 L996.5,783 L996.5,759.2 L1003.6,759.2 L1003.6,783 L1007.5,783 L1007.5,758.1 L1025.4,758.1 L1025.4,783 L1123.3,783 L1123.3,758.1 L1154.8,758.1 L1154.8,783 L1214.3,783 L1214.3,760.2 L1302.2,760.2 L1302.2,783 L1582.3,783 L1582.3,756.8 L1603.9,756.8 L1603.9,783 L1626,783" fill="none" stroke="#6f6030" stroke-width="1.2"/>
<line x1="66.5" y1="783.5" x2="66.5" y2="792" stroke="#ccd6eb"/>
<text x="66.5" y="800" font-size="11" fill="#666" text-anchor="middle">18:00</text>
<line x1="150.7" y1="783.5" x2="150.7" y2="792" stroke="#ccd6eb"/>
<text x="150.7" y="800" font-size="11" fill="#666" text-anchor="middle">20:00</text>
<line x1="234.9" y1="783.5" x2="234.9" y2="792" stroke="#ccd6eb"/>
<text x="234.9" y="800" font-size="11" fill="#666" text-anchor="middle">22:00</text>
<line x1="319.1" y1="783.5" x2="319.1" y2="792" stroke="#ccd6eb"/>
<text x="319.1" y="800" font-size="11" fill="#666" text-anchor="middle" textLength="37.9" lengthAdjust="spacingAndGlyphs">21. 一月</text>
<line x1="403.3" y1="783.5" x2="403.3" y2="792" stroke="#ccd6eb"/>
<text x="403.3" y="800" font-size="11" fill="#666" text-anchor="middle">02:00</text>
<line x1="487.5" y1="783.5" x2="487.5" y2="792" stroke="#ccd6eb"/>
<text x="487.5" y="800" font-size="11" fill="#666" text-anchor="middle">04:00</text>
<line x1="571.8" y1="783.5" x2="571.8" y2="792" stroke="#ccd6eb"/>
<text x="571.8" y="800" font-size="11" fill="#666" text-anchor="middle">06:00</text>
<line x1="656.0" y1="783.5" x2="656.0" y2="792" stroke="#ccd6eb"/>
<text x="656.0" y="800" font-size="11" fill="#666" text-anchor="middle">08:00</text>
<line x1="740.2" y1="783.5" x2="740.2" y2="792" stroke="#ccd6eb"/>
<text x="740.2" y="800" font-size="11" fill="#666" text-anchor="middle">10:00</text>
<line x1="824.4" y1="783.5" x2="824.4" y2="792" stroke="#ccd6eb"/>
<text x="824.4" y="800" font-size="11" fill="#666" text-anchor="middle">12:00</text>
<line x1="908.6" y1="783.5" x2="908.6" y2="792" stroke="#ccd6eb"/>
<text x="908.6" y="800" font-size="11" fill="#666" text-anchor="middle">14:00</text>
<line x1="992.8" y1="783.5" x2="992.8" y2="792" stroke="#ccd6eb"/>
<text x="992.8" y="800" font-size="11" fill="#666" text-anchor="middle">16:00</text>
<line x1="1077.0" y1="783.5" x2="1077.0" y2="792" stroke="#ccd6eb"/>
<text x="1077.0" y="800" font-size="11" fill="#666" text-anchor="middle">18:00</text>
<line x1="1161.2" y1="783.5" x2="1161.2" y2="792" stroke="#ccd6eb"/>
<text x="1161.2" y="800" font-size="11" fill="#666" text-anchor="middle">20:00</text>
<line x1="1245.4" y1="783.5" x2="1245.4" y2="792" stroke="#ccd6eb"/>
<text x="1245.4" y="800" font-size="11" fill="#666" text-anchor="middle">22:00</text>
<line x1="1329.6" y1="783.5" x2="1329.6" y2="792" stroke="#ccd6eb"/>
<text x="1329.6" y="800" font-size="11" fill="#666" text-anchor="middle" textLength="37.9" lengthAdjust="spacingAndGlyphs">22. 一月</text>
<line x1="1413.9" y1="783.5" x2="1413.9" y2="792" stroke="#ccd6eb"/>
<text x="1413.9" y="800" font-size="11" fill="#666" text-anchor="middle">02:00</text>
<line x1="1498.1" y1="783.5" x2="1498.1" y2="792" stroke="#ccd6eb"/>
<text x="1498.1" y="800" font-size="11" fill="#666" text-anchor="middle">04:00</text>
<line x1="1582.3" y1="783.5" x2="1582.3" y2="792" stroke="#ccd6eb"/>
<text x="1582.3" y="800" font-size="11" fill="#666" text-anchor="middle">06:00</text>
<text x="1636" y="500.7" font-size="11" fill="#666" text-anchor="middle" textLength="42" lengthAdjust="spacingAndGlyphs" transform="rotate(90 1636 500.7)">浮动盈亏</text>
<text x="1636" y="610.6" font-size="11" fill="#666" text-anchor="middle" textLength="42" lengthAdjust="spacingAndGlyphs" transform="rotate(90 1636 610.6)">周期盈亏</text>
<text x="1636" y="681.1" font-size="11" fill="#666" text-anchor="middle" textLength="59" lengthAdjust="spacingAndGlyphs" transform="rotate(90 1636 681.1)">交易量/持仓</text>
<text x="1636" y="750.7" font-size="11" fill="#666" text-anchor="middle" textLength="52.5" lengthAdjust="spacingAndGlyphs" transform="rotate(90 1636 750.7)">资金利用率</text>
<circle cx="588.2" cy="812.6" r="5.3" fill="#4572a7"/>
<text x="600.6" y="816.8000000000001" font-size="11.5" fill="#333" textLength="42" lengthAdjust="spacingAndGlyphs">浮动盈亏</text>
<line x1="661.2" y1="812.6" x2="675.2" y2="812.6" stroke="#aa4643" stroke-width="1"/>
<text x="680.7" y="816.8000000000001" font-size="11.5" fill="#333" textLength="41.6" lengthAdjust="spacingAndGlyphs">基准收益</text>
<circle cx="748.3" cy="812.6" r="5.3" fill="#434348"/>
<text x="760" y="816.8000000000001" font-size="11.5" fill="#333" textLength="42.7" lengthAdjust="spacingAndGlyphs">周期盈亏</text>
<circle cx="828.3" cy="812.6" r="5.3" fill="#90ed7d"/>
<text x="840.6" y="816.8000000000001" font-size="11.5" fill="#333" textLength="31.4" lengthAdjust="spacingAndGlyphs">交易量</text>
<circle cx="897.6" cy="812.6" r="5.3" fill="#f7a35c"/>
<text x="910.5" y="816.8000000000001" font-size="11.5" fill="#333" textLength="20.2" lengthAdjust="spacingAndGlyphs">多仓</text>
<circle cx="956.2" cy="812.6" r="5.3" fill="#8085e9"/>
<text x="968" y="816.8000000000001" font-size="11.5" fill="#333" textLength="20.8" lengthAdjust="spacingAndGlyphs">空仓</text>
<line x1="1007.5" y1="812.6" x2="1021.9" y2="812.6" stroke="#8b7d4b" stroke-width="1"/>
<text x="1027" y="816.8000000000001" font-size="11.5" fill="#333" textLength="52.9" lengthAdjust="spacingAndGlyphs">资金利用率</text>
<rect x="22" y="824.2" width="1604.8" height="19" fill="#c8d5e5"/>
<line x1="22" y1="824.8" x2="1626.8" y2="824.8" stroke="#b7c3d2" stroke-width="1.2"/>
<line x1="22" y1="843" x2="1626.8" y2="843" stroke="#d9dde3" stroke-width="1"/>
<line x1="149.3" y1="825" x2="149.3" y2="843" stroke="#bdc9d8" stroke-width="1"/>
<text x="153.1" y="839.2" font-size="11" fill="#a9b4c2">20:00</text>
<line x1="318.1" y1="825" x2="318.1" y2="843" stroke="#bdc9d8" stroke-width="1"/>
<text x="321.9" y="839.2" font-size="11" fill="#a9b4c2" textLength="37.2" lengthAdjust="spacingAndGlyphs">21. 一月</text>
<line x1="487.0" y1="825" x2="487.0" y2="843" stroke="#bdc9d8" stroke-width="1"/>
<text x="490.8" y="839.2" font-size="11" fill="#a9b4c2">04:00</text>
<line x1="655.8" y1="825" x2="655.8" y2="843" stroke="#bdc9d8" stroke-width="1"/>
<text x="659.6" y="839.2" font-size="11" fill="#a9b4c2">08:00</text>
<line x1="824.7" y1="825" x2="824.7" y2="843" stroke="#bdc9d8" stroke-width="1"/>
<text x="828.5" y="839.2" font-size="11" fill="#a9b4c2">12:00</text>
<line x1="993.5" y1="825" x2="993.5" y2="843" stroke="#bdc9d8" stroke-width="1"/>
<text x="997.3" y="839.2" font-size="11" fill="#a9b4c2">16:00</text>
<line x1="1162.3" y1="825" x2="1162.3" y2="843" stroke="#bdc9d8" stroke-width="1"/>
<text x="1166.1" y="839.2" font-size="11" fill="#a9b4c2">20:00</text>
<line x1="1331.2" y1="825" x2="1331.2" y2="843" stroke="#bdc9d8" stroke-width="1"/>
<text x="1335.0" y="839.2" font-size="11" fill="#a9b4c2" textLength="37.2" lengthAdjust="spacingAndGlyphs">22. 一月</text>
<line x1="1500.0" y1="825" x2="1500.0" y2="843" stroke="#bdc9d8" stroke-width="1"/>
<text x="1503.8" y="839.2" font-size="11" fill="#a9b4c2">04:00</text>
<rect x="18.5" y="826.5" width="7.5" height="14" rx="1.5" fill="#f4f4f4" stroke="#a0a0a0" stroke-width="1"/>
<line x1="21.5" y1="830" x2="21.5" y2="837.5" stroke="#777" stroke-width="0.8"/>
<line x1="23.5" y1="830" x2="23.5" y2="837.5" stroke="#777" stroke-width="0.8"/>
<rect x="1622.5" y="826.5" width="7.5" height="14" rx="1.5" fill="#f4f4f4" stroke="#a0a0a0" stroke-width="1"/>
<line x1="1625.5" y1="830" x2="1625.5" y2="837.5" stroke="#777" stroke-width="0.8"/>
<line x1="1627.5" y1="830" x2="1627.5" y2="837.5" stroke="#777" stroke-width="0.8"/>
<text x="23.2" y="413" font-size="11" fill="#666" textLength="29.2" lengthAdjust="spacingAndGlyphs">Zoom</text>
<rect x="57.6" y="399" width="28.5" height="19.5" rx="2" fill="#f7f7f7"/>
<text x="71.85" y="413" font-size="11" fill="#333" text-anchor="middle">1h</text>
<rect x="90.6" y="399" width="28.5" height="19.5" rx="2" fill="#f7f7f7"/>
<text x="104.85" y="413" font-size="11" fill="#333" text-anchor="middle">3h</text>
<rect x="123.8" y="399" width="28.5" height="19.5" rx="2" fill="#f7f7f7"/>
<text x="138.05" y="413" font-size="11" fill="#333" text-anchor="middle">8h</text>
<rect x="157" y="399" width="28.5" height="19.5" rx="2" fill="#f7f7f7"/>
<text x="171.25" y="413" font-size="11" fill="#333" text-anchor="middle">12h</text>
<rect x="190.6" y="399" width="28.5" height="19.5" rx="2" fill="#f7f7f7"/>
<text x="204.85" y="413" font-size="11" fill="#333" text-anchor="middle">24h</text>
<rect x="223.9" y="399" width="28.5" height="19.5" rx="2" fill="#e6ebf5"/>
<text x="238.15" y="413" font-size="11" fill="#000" text-anchor="middle" font-weight="bold">All</text>
<text x="456.7" y="383.6" font-size="12.5" fill="#666" textLength="747" lengthAdjust="spacingAndGlyphs">初始净值：500000 累计收益: 0.076 %, 年化收益(365天)：17.441 %, 夏普比率：1.293, 年化波动率：0.112 %, 最大回撤：0.040 %</text>
<text x="1587.7" y="385.5" font-size="12" fill="#333" textLength="20.6" lengthAdjust="spacingAndGlyphs">全屏</text>
<line x1="1621" y1="375.7" x2="1634.5" y2="375.7" stroke="#666" stroke-width="2.5" stroke-linecap="round"/>
<line x1="1621" y1="380.2" x2="1634.5" y2="380.2" stroke="#666" stroke-width="2.5" stroke-linecap="round"/>
<line x1="1621" y1="384.7" x2="1634.5" y2="384.7" stroke="#666" stroke-width="2.5" stroke-linecap="round"/>
<rect x="1253.5" y="382.5" width="168" height="106" rx="1.5" fill="none" stroke="#000" stroke-opacity="0.05" stroke-width="5"/>
<rect x="1253.5" y="382.5" width="168" height="106" rx="1.5" fill="none" stroke="#000" stroke-opacity="0.1" stroke-width="3"/>
<rect x="1253.5" y="382.5" width="168" height="106" rx="1.5" fill="none" stroke="#000" stroke-opacity="0.15" stroke-width="1"/>
<rect x="1252.5" y="381.5" width="168" height="106" rx="1.5" fill="#f7f7f7" fill-opacity="0.88" stroke="#4572a7" stroke-width="1"/>
<text x="1259.2" y="397.2" font-size="10.5" fill="#333" textLength="97.5" lengthAdjust="spacingAndGlyphs">2025-01-22 02:25:00</text>
<circle cx="1262" cy="406.30" r="2.2" fill="#4572a7"/>
<text x="1268.8" y="410.10" font-size="11" fill="#333" textLength="142.8" lengthAdjust="spacingAndGlyphs">浮动盈亏: <tspan font-weight="bold">352.9833</tspan> (0.07%)</text>
<circle cx="1262" cy="419.85" r="2.2" fill="#aa4643"/>
<text x="1268.8" y="423.65" font-size="11" fill="#333" textLength="95.4" lengthAdjust="spacingAndGlyphs">基准收益: <tspan font-weight="bold">−63.71%</tspan></text>
<circle cx="1262" cy="433.40" r="2.2" fill="#80699b"/>
<text x="1268.8" y="437.20" font-size="11" fill="#333" textLength="87.2" lengthAdjust="spacingAndGlyphs">周期盈亏: <tspan font-weight="bold">0.0000</tspan></text>
<circle cx="1262" cy="446.95" r="2.2" fill="#f7a35c"/>
<text x="1268.8" y="450.75" font-size="11" fill="#333" textLength="34.4" lengthAdjust="spacingAndGlyphs">多仓: <tspan font-weight="bold">0</tspan></text>
<circle cx="1262" cy="460.50" r="2.2" fill="#8085e9"/>
<text x="1268.8" y="464.30" font-size="11" fill="#333" textLength="34.4" lengthAdjust="spacingAndGlyphs">空仓: <tspan font-weight="bold">0</tspan></text>
<circle cx="1262" cy="474.05" r="2.2" fill="#5a4a12"/>
<text x="1268.8" y="477.85" font-size="11" fill="#333" textLength="92.7" lengthAdjust="spacingAndGlyphs">资金利用率: <tspan font-weight="bold">0.00%</tspan></text>
<defs><filter id="sh" x="-50%" y="-50%" width="200%" height="200%"><feGaussianBlur stdDeviation="3"/></filter></defs>
<circle cx="1653" cy="807" r="18.5" fill="#000" fill-opacity="0.09" filter="url(#sh)"/>
<circle cx="1653" cy="806" r="17.9" fill="#fff"/>
<line x1="1646.9" y1="800.6" x2="1659.4" y2="800.6" stroke="#333" stroke-width="1.1"/>
<line x1="1653" y1="805" x2="1653" y2="812" stroke="#555" stroke-width="1.2"/>
<polygon points="1653,803.3 1651,806 1655,806" fill="#444"/>
</svg>
</body></html>
